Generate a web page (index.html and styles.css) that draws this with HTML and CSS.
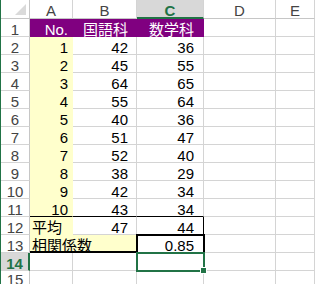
FILE: index.html
```html
<!DOCTYPE html>
<html lang="ja">
<head>
<meta charset="utf-8">
<link rel="stylesheet" href="styles.css">
</head>
<body>
<div class="sheet">
  <div class="corner"><span class="tri"></span></div>
  <div class="h">A</div><div class="h">B</div><div class="h sel">C</div><div class="h">D</div><div class="h">E</div>

  <div class="rh">1</div><div class="c pu ca">No.</div><div class="c pu cb">国語科</div><div class="c pu cc">数学科</div><div class="c"></div><div class="c"></div>
  <div class="rh">2</div><div class="c ye ca">1</div><div class="c cb">42</div><div class="c cc">36</div><div class="c"></div><div class="c"></div>
  <div class="rh">3</div><div class="c ye ca">2</div><div class="c cb">45</div><div class="c cc">55</div><div class="c"></div><div class="c"></div>
  <div class="rh">4</div><div class="c ye ca">3</div><div class="c cb">64</div><div class="c cc">65</div><div class="c"></div><div class="c"></div>
  <div class="rh">5</div><div class="c ye ca">4</div><div class="c cb">55</div><div class="c cc">64</div><div class="c"></div><div class="c"></div>
  <div class="rh">6</div><div class="c ye ca">5</div><div class="c cb">40</div><div class="c cc">36</div><div class="c"></div><div class="c"></div>
  <div class="rh">7</div><div class="c ye ca">6</div><div class="c cb">51</div><div class="c cc">47</div><div class="c"></div><div class="c"></div>
  <div class="rh">8</div><div class="c ye ca">7</div><div class="c cb">52</div><div class="c cc">40</div><div class="c"></div><div class="c"></div>
  <div class="rh">9</div><div class="c ye ca">8</div><div class="c cb">38</div><div class="c cc">29</div><div class="c"></div><div class="c"></div>
  <div class="rh">10</div><div class="c ye ca">9</div><div class="c cb">42</div><div class="c cc">34</div><div class="c"></div><div class="c"></div>
  <div class="rh">11</div><div class="c ye ca bb">10</div><div class="c cb bb">43</div><div class="c cc bb">34</div><div class="c"></div><div class="c"></div>
  <div class="rh">12</div><div class="c ye txt">平均</div><div class="c cb">47</div><div class="c cc br">44</div><div class="c"></div><div class="c"></div>
  <div class="rh">13</div><div class="c ye txt span2 thick">相関係数</div><div class="c cc box">0.85</div><div class="c"></div><div class="c"></div>
  <div class="rh rsel">14</div><div class="c"></div><div class="c"></div><div class="c active"></div><div class="c"></div><div class="c"></div>
  <div class="rh last">15</div><div class="c"></div><div class="c"></div><div class="c"></div><div class="c"></div><div class="c"></div>
</div>
</body>
</html>
```

FILE: styles.css
```css
html, body {
  margin: 0;
  padding: 0;
  background: #ffffff;
  overflow: hidden;
}

.sheet {
  display: grid;
  grid-template-columns: 29px 43px 64px 67px 72px 1fr;
  grid-template-rows: 19px;
  grid-auto-rows: 18px;
  border-left: 1px solid #217346;
  font-family: "Liberation Sans", "Noto Sans CJK JP", sans-serif;
  font-size: 15px;
  color: #000;
  height: 284px;
}

.sheet > div {
  box-sizing: border-box;
  border-right: 1px solid #d4d4d4;
  border-bottom: 1px solid #d4d4d4;
  white-space: nowrap;
  line-height: 14px;
  padding-top: 4px;
  min-width: 0;
}

.corner {
  position: relative;
  border-right-color: #c6c6c6 !important;
  border-bottom-color: #c6c6c6 !important;
}

.tri {
  position: absolute;
  right: 3px;
  bottom: 3px;
  width: 0;
  height: 0;
  border-left: 11px solid transparent;
  border-bottom: 11px solid #dadada;
}

.sheet > .h {
  text-align: center;
  color: #444;
  font-size: 15px;
  padding-top: 4px;
  border-bottom-color: #c6c6c6;
}

.sheet > .h.sel {
  background: #d8d8d8;
  color: #217346;
  font-weight: bold;
  border-bottom: 2px solid #217346;
}

.sheet > .rh {
  text-align: center;
  color: #444;
  border-right-color: #c6c6c6;
}

.sheet > .rh.last {
  line-height: 10px;
  overflow: hidden;
}

.sheet > .rh.rsel {
  background: #d8d8d8;
  color: #217346;
  font-weight: bold;
  border-right: 2px solid #217346;
}

.c {
  overflow: visible;
}

.ca { text-align: right; padding-right: 4px; }
.cb { text-align: right; padding-right: 8px; }
.cc { text-align: right; padding-right: 9px; }

.txt {
  text-align: left;
  padding-left: 2px;
}

.sheet > .pu {
  background: #800080;
  color: #ffffff;
  border-color: #800080;
}

.sheet > .ye {
  background: #ffffcc;
  border-color: #ffffcc;
}

.sheet > .bb {
  border-bottom: 1px solid #000;
}

.sheet > .br {
  border-right: 1px solid #000;
}

.span2 {
  grid-column: span 2;
}

.sheet > .thick {
  border-bottom: 2px solid #000;
}

.box {
  outline: 2px solid #000;
  outline-offset: -1px;
  position: relative;
  z-index: 1;
}

.active {
  position: relative;
  outline: 2px solid #217346;
  outline-offset: -1px;
  z-index: 2;
}

.active::after {
  content: "";
  position: absolute;
  right: -4px;
  bottom: -4px;
  width: 5px;
  height: 5px;
  background: #217346;
  border: 1px solid #ffffff;
}
```
